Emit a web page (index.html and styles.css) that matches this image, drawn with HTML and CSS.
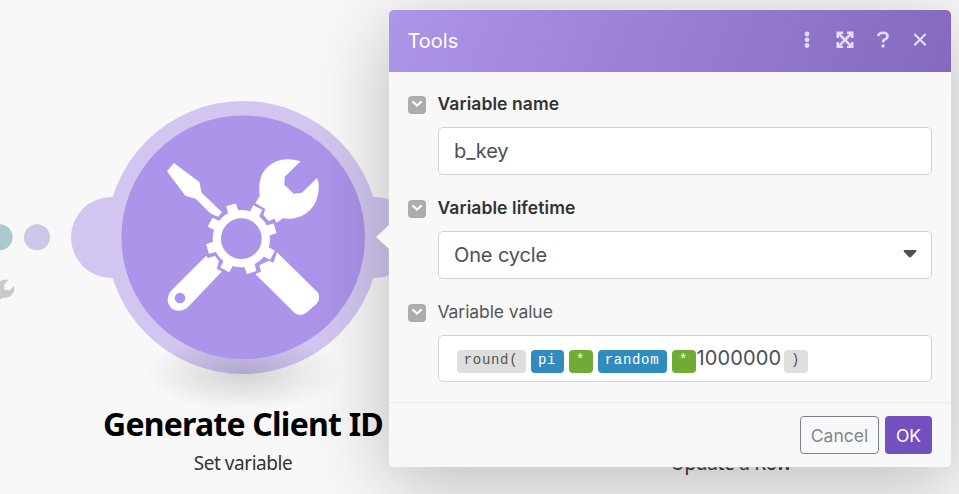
FILE: index.html
```html
<!DOCTYPE html>
<html lang="en">
<head>
<meta charset="utf-8">
<title>Tools</title>
<link rel="stylesheet" href="styles.css">
</head>
<body>
<main class="canvas">
  <svg class="graph" viewBox="0 0 959 494" aria-hidden="true">
    <defs>
      <radialGradient id="ground">
        <stop offset="0" stop-color="#000" stop-opacity=".15"/>
        <stop offset=".5" stop-color="#000" stop-opacity=".075"/>
        <stop offset="1" stop-color="#000" stop-opacity="0"/>
      </radialGradient>
    </defs>
    <circle cx="-.4" cy="237.3" r="13" fill="#aaccd0"/>
    <circle cx="37" cy="237.3" r="13" fill="#ccc6ea"/>
    <path fill="#c9c9c9" d="M0 281.5Q4 278.300 8.500 280L4 284.500 4.300 289.500 9.500 290.500 14 285.800Q15.300 290.500 12.500 294 9 298.500 3 297.500L0 299.500Z"/>
    <circle cx="111.500" cy="237.500" r="40.500" fill="#d2c6f0"/>
    <circle cx="374.500" cy="237.500" r="40.500" fill="#d2c6f0"/>
    <circle cx="243" cy="237.500" r="136.500" fill="#d2c6f0"/>
    <ellipse cx="243" cy="373" rx="98" ry="38" fill="url(#ground)"/>
    <circle cx="243.200" cy="237.300" r="121.800" fill="#ac94ea"/>
    <g transform="translate(150 140) scale(.33333)" fill="#fff">
      <path d="M72 69L148 126 155 158 216 217 205 230Q190 226 179 218L138 177 106 167 51 94Z"/>
      <path d="M452 64L404 110 403 134 431 161 456 158 501 114 506 128Q510 188 470 219 438 241 399 235L379 248 374 236 356 243 340 225 346 207 316 189 329 169Q322 110 352 82 390 45 452 64Z"/>
      <path d="M381 337L502 456Q507 461 507 468V476Q507 484 500 491L467 520Q451 530 435 520L316 402 333 395 328 376 357 362 370 368Z"/>
      <path fill-rule="evenodd" d="M168 348L174 354 195 348 207 364 200 387 216 394 117 498Q103 513 85 512 64 511 55 491 48 468 65 451ZM106 474A16 16 0 1 0 74 474A16 16 0 1 0 106 474Z"/>
      <circle cx="274" cy="296" r="73.500" fill="none" stroke="#fff" stroke-width="25"/>
      <g id="teeth">
        <path id="tooth" d="M259 190H289L290 217H258Z" transform="rotate(-17 274 296)"/>
        <use href="#tooth" transform="rotate(45 274 296)"/>
        <use href="#tooth" transform="rotate(90 274 296)"/>
        <use href="#tooth" transform="rotate(135 274 296)"/>
        <use href="#tooth" transform="rotate(180 274 296)"/>
        <use href="#tooth" transform="rotate(225 274 296)"/>
        <use href="#tooth" transform="rotate(270 274 296)"/>
        <use href="#tooth" transform="rotate(315 274 296)"/>
      </g>
    </g>
  </svg>
  <div class="node-label">
    <div class="node-name">Generate Client ID</div>
    <div class="node-action">Set variable</div>
  </div>
  <div class="next-label">Update a Row</div>

  <section class="dialog">
    <header class="head">
      <h1 class="title">Tools</h1>
      <div class="actions">
        <svg class="action" viewBox="0 0 20 20" fill="currentColor"><circle cx="10" cy="4" r="2.400"/><circle cx="10" cy="9.800" r="2.400"/><circle cx="10" cy="15.500" r="2.400"/></svg>
        <svg class="action" viewBox="0 0 20 20"><path fill="currentColor" d="M1.500 1.500H8V4H5.800L10 8.100 14.200 4H12V1.500H18.500V8H16V5.800L11.900 10 16 14.200V12H18.500V18H12V15.800H14.200L10 11.800 5.800 15.800H8V18H1.500V12H4V14.200L8.100 10 4 5.800V8H1.500Z"/></svg>
        <svg class="action" viewBox="0 0 20 20" fill="none" stroke="currentColor"><path stroke-width="2.600" d="M5.300 6.200Q5.700 2.800 10 2.800 14.500 2.800 14.500 6.300 14.500 8.500 12.200 9.300 10 10 10 12.600"/><circle cx="10" cy="16" r="1.700" fill="currentColor" stroke="none"/></svg>
        <svg class="action close" viewBox="0 0 20 20" fill="none" stroke="currentColor"><path stroke-width="2.100" d="M4.300 4L15.700 15.300M15.700 4L4.300 15.300"/></svg>
      </div>
    </header>
    <div class="body">
      <div class="field">
        <span class="toggle"><svg viewBox="0 0 18 18"><path d="M5 6L9 9.500 13 6"/></svg></span>
        <label class="label strong">Variable name</label>
        <div class="control">b_key</div>
      </div>
      <div class="field">
        <span class="toggle"><svg viewBox="0 0 18 18"><path d="M5 6L9 9.500 13 6"/></svg></span>
        <label class="label strong">Variable lifetime</label>
        <div class="control select">One cycle<svg class="caret" viewBox="0 0 14 8"><path d="M1.300 0H12.700Q14 .5 13 1.800L8.300 6.800Q7 8 5.700 6.800L1 1.800Q0 .5 1.300 0Z"/></svg></div>
      </div>
      <div class="field">
        <span class="toggle"><svg viewBox="0 0 18 18"><path d="M5 6L9 9.500 13 6"/></svg></span>
        <label class="label">Variable value</label>
        <div class="control formula"><span class="pill fn open">round(</span><span class="pill var pi">pi</span><span class="pill op">*</span><span class="pill var random">random</span><span class="pill op last">*</span><span class="num">1000000</span><span class="pill fn">)</span></div>
      </div>
    </div>
    <footer class="foot">
      <button class="btn cancel">Cancel</button>
      <button class="btn ok">OK</button>
    </footer>
  </section>
  <span class="pointer"></span>
</main>
</body>
</html>
```

FILE: styles.css
```css
* { box-sizing: border-box; }
body { margin: 0; }
.canvas {
  position: relative;
  width: 959px;
  height: 494px;
  overflow: hidden;
  background: #f8f8f8;
  font-family: Inter, sans-serif;
}
.graph { display: block; width: 959px; height: 494px; }
.node-label {
  position: absolute;
  left: 83px;
  top: 402px;
  width: 320px;
  text-align: center;
  font-family: "Noto Sans", sans-serif;
  white-space: nowrap;
}
.node-name { font-size: 32px; line-height: 44px; font-weight: 700; color: #000; letter-spacing: -.78px; }
.node-action { font-size: 19px; line-height: 34px; color: #333; letter-spacing: -.45px; }
.next-label {
  position: absolute;
  left: 631px;
  top: 446px;
  width: 200px;
  text-align: center;
  font: 19px/34px "Noto Sans", sans-serif;
  letter-spacing: -.3px;
  color: #333;
}
.dialog {
  position: absolute;
  left: 389px;
  top: 10px;
  width: 562px;
  height: 457px;
  display: flex;
  flex-direction: column;
  border-radius: 5px;
  background: #f8f8f8;
  box-shadow: 0 16px 80px rgba(0, 0, 0, .25), 0 0 0 .5px rgba(255, 255, 255, .5);
  overflow: hidden;
}
.head {
  height: 62px;
  flex: none;
  display: flex;
  align-items: center;
  justify-content: space-between;
  padding: 0 21px 0 18.5px;
  color: #fff;
  background: linear-gradient(110deg, #ad95ea, #8469bd);
}
.title { margin: 0; font-size: 20px; font-weight: 400; color: #fff; }
.actions { display: flex; gap: 18px; color: #e4dcf6; padding-bottom: 3px; }
.action { width: 20px; height: 20px; display: block; }
.close { margin-left: -1px; }
.body { flex: 1; padding: 19px 19px 0 18.5px; }
.field {
  display: grid;
  grid-template-columns: 18px 494.5px;
  grid-template-rows: 26px 48px;
  column-gap: 12px;
  row-gap: 10px;
  margin-bottom: 20px;
}
.field:last-child { margin-bottom: 0; }
.toggle { align-self: center; width: 18px; height: 18px; margin-top: 1px; border-radius: 4px; background: #acacac; }
.toggle svg { display: block; width: 18px; height: 18px; fill: none; stroke: #fff; stroke-width: 2.3; stroke-linecap: round; }
.label { font-size: 17.500px; line-height: 26px; color: #555; letter-spacing: -.08px; }
.strong { font-weight: 600; color: #333; letter-spacing: .08px; }
.control {
  grid-column: 2;
  display: flex;
  align-items: center;
  padding: 0 16px 0 15.5px;
  border: 1px solid #d1d2d4;
  border-radius: 5px;
  background: #fff;
  color: #495057;
  font-size: 20px;
  letter-spacing: -.12px;
}
.select { justify-content: space-between; padding-right: 14px; }
.caret { width: 14px; height: 8px; fill: #495057; margin-bottom: 3px; }
.formula { padding-left: 18px; height: 47px; }
.pill {
  height: 23px;
  margin-top: 5px;
  border-radius: 4px;
  text-align: center;
  font: 14px/21px "Courier New", "Liberation Mono", monospace;
  letter-spacing: .7px;
  color: #fff;
}
.fn { width: 24px; background: #dedede; color: #555; }
.open { width: 69px; margin-right: 5px; }
.var { background: #308cbd; }
.pi { width: 33px; margin-right: 5px; }
.random { width: 69px; margin-right: 5px; }
.op { width: 24px; background: #70ac34; margin-right: 5px; }
.last { margin-right: 1px; }
.num { width: 87px; line-height: 24px; margin-top: -2px; letter-spacing: .15px; white-space: nowrap; }
.foot {
  height: 65px;
  flex: none;
  display: flex;
  justify-content: flex-end;
  gap: 6px;
  padding: 13px 19px 0 0;
  border-top: 1px solid #eaeaea;
}
.btn { height: 38px; padding: 0; border-radius: 4px; font: 17.5px Inter, sans-serif; }
.cancel { width: 79px; border: 1px solid #77818b; background: transparent; color: #818990; }
.ok { width: 47px; border: 0; background: #744fbe; color: #fff; }
.pointer {
  position: absolute;
  left: 376px;
  top: 225px;
  width: 13px;
  height: 24px;
  background: #f8f8f8;
  clip-path: polygon(0 50%, 100% 0, 100% 100%);
}
```
